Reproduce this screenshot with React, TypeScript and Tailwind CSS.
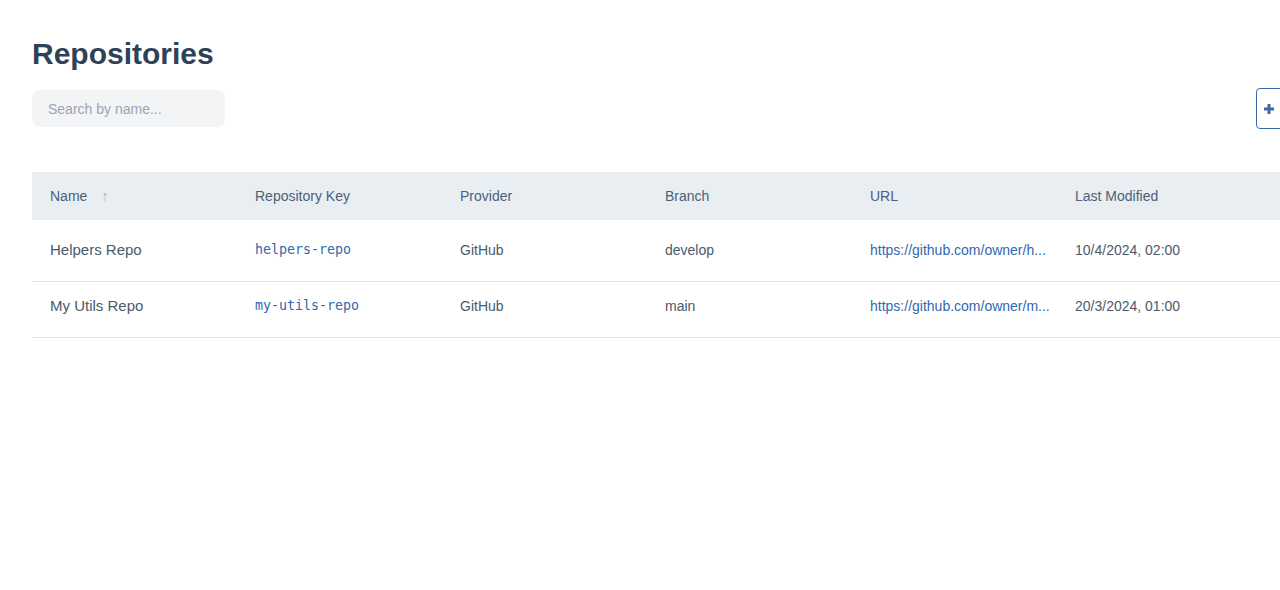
import React from 'react';

type Repo = {
  name: string;
  key: string;
  provider: string;
  branch: string;
  url: string;
  modified: string;
};

const repos: Repo[] = [
  {
    name: 'Helpers Repo',
    key: 'helpers-repo',
    provider: 'GitHub',
    branch: 'develop',
    url: 'https://github.com/owner/h...',
    modified: '10/4/2024, 02:00',
  },
  {
    name: 'My Utils Repo',
    key: 'my-utils-repo',
    provider: 'GitHub',
    branch: 'main',
    url: 'https://github.com/owner/m...',
    modified: '20/3/2024, 01:00',
  },
];

const columns = ['Repository Key', 'Provider', 'Branch', 'URL', 'Last Modified'];

const App: React.FC = () => {
  return (
    <div className="w-screen h-[590px] overflow-hidden bg-white" style={{ fontFamily: '"Liberation Sans", Arial, sans-serif' }}>
      <div className="w-[1415px] pl-8 pr-4 pt-[34px]">
        <h1 className="text-[30px] leading-[40px] font-bold text-[#2e4257]">Repositories</h1>
        <div className="flex justify-between items-center mt-[14px]">
          <input
            type="text"
            placeholder="Search by name..."
            className="w-[193px] h-[37px] px-4 rounded-lg bg-[#f3f4f6] text-sm text-[#4a5568] placeholder:text-[#9aa5b4] outline-none"
          />
          <button className="h-[41px] pl-[7px] pr-3 flex items-center gap-2 border border-[#3a6aa3] rounded-[4px] text-[#3a6aa3] text-sm font-semibold">
            <svg width="10" height="10" viewBox="0 0 10 10" className="fill-current">
              <rect x="3.5" y="0" width="3" height="10" />
              <rect x="0" y="3.5" width="10" height="3" />
            </svg>
            Add Repository
          </button>
        </div>

        <div className="mt-[43px]">
          <div className="flex h-12 items-center bg-[#e9eef3] text-sm text-[#4c6177]">
            <div className="w-[205px] pl-[18px] flex items-center">
              Name
              <span className="ml-[14px] text-[#a9b5c2] text-[15px]">↑</span>
            </div>
            {columns.map((c) => (
              <div key={c} className="w-[205px] pl-[18px]">
                {c}
              </div>
            ))}
          </div>
          {repos.map((r, i) => (
            <div
              key={r.key}
              className={`flex items-start border-b border-[#e2e6ea] text-sm leading-5 text-[#4a5a6c] ${i === 0 ? 'h-[62px] pt-5' : 'h-14 pt-[14px]'}`}
            >
              <div className="w-[205px] pl-[18px] text-[15px]">{r.name}</div>
              <div className="w-[205px] pl-[18px] text-[13.3px] text-[#3168ae]" style={{ fontFamily: '"DejaVu Sans Mono", monospace' }}>
                {r.key}
              </div>
              <div className="w-[205px] pl-[18px]">{r.provider}</div>
              <div className="w-[205px] pl-[18px]">{r.branch}</div>
              <div className="w-[205px] pl-[18px] text-[#3168ae]">{r.url}</div>
              <div className="w-[205px] pl-[18px]">{r.modified}</div>
            </div>
          ))}
        </div>
      </div>
    </div>
  );
};

export default App;
